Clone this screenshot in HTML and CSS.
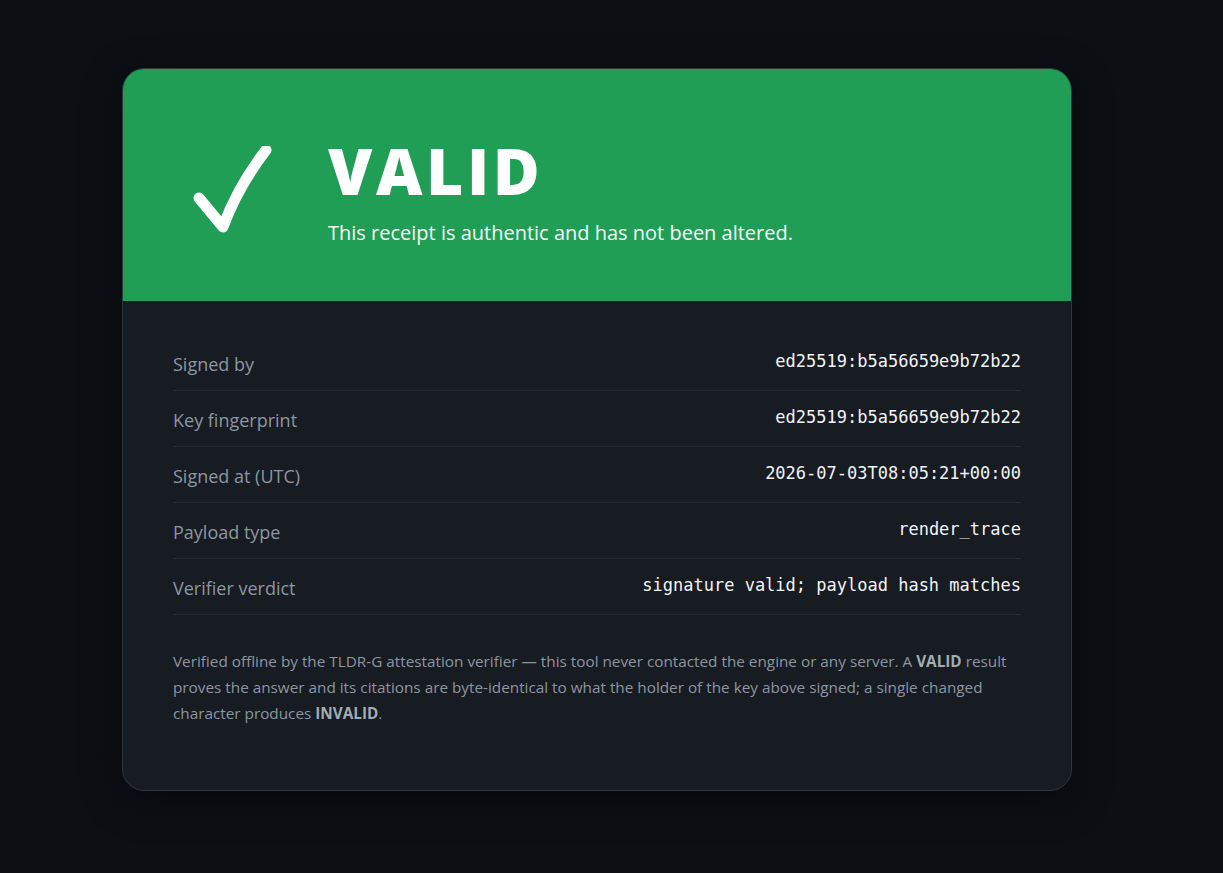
FILE: index.html
```html
<!DOCTYPE html>
<html lang="en">
<head>
<meta charset="utf-8">
<title>Receipt verification — VALID</title>
<link rel="stylesheet" href="styles.css">
</head>
<body>
<main class="page">
  <section class="card">
    <header class="banner">
      <svg class="check" viewBox="0 0 80 90" width="80" height="90" aria-hidden="true">
        <path d="M6 52 L30 81 Q44 42 73 4" fill="none" stroke="#ffffff" stroke-width="11" stroke-linecap="round" stroke-linejoin="round"/>
      </svg>
      <div class="banner-text">
        <h1 class="verdict">VALID</h1>
        <p class="summary">This receipt is authentic and has not been altered.</p>
      </div>
    </header>
    <div class="details">
      <dl class="rows">
        <div class="row"><dt>Signed by</dt><dd>ed25519:b5a56659e9b72b22</dd></div>
        <div class="row"><dt>Key fingerprint</dt><dd>ed25519:b5a56659e9b72b22</dd></div>
        <div class="row"><dt>Signed at (UTC)</dt><dd>2026-07-03T08:05:21+00:00</dd></div>
        <div class="row"><dt>Payload type</dt><dd>render_trace</dd></div>
        <div class="row"><dt>Verifier verdict</dt><dd>signature valid; payload hash matches</dd></div>
      </dl>
      <p class="note">Verified offline by the TLDR-G attestation verifier — this tool never contacted the engine or any server. A <strong>VALID</strong> result proves the answer and its citations are byte-identical to what the holder of the key above signed; a single changed character produces <strong>INVALID</strong>.</p>
    </div>
  </section>
</main>
</body>
</html>
```
FILE: styles.css
```css
* { box-sizing: border-box; }
html, body { margin: 0; padding: 0; }
body {
  background: #0c0f14;
  font-family: "Open Sans", "Noto Sans", sans-serif;
  color: #e6edf3;
  min-height: 873px;
}
.page {
  display: flex;
  padding: 68px 0 40px 122px;
}
.card {
  width: 950px;
  background: #171b22;
  border: 1px solid #30363d;
  border-radius: 22px;
  overflow: hidden;
  box-shadow: 0 10px 40px rgba(0, 0, 0, 0.45);
}
.banner {
  background: #209e55;
  display: flex;
  align-items: center;
  height: 232px;
  padding: 14px 0 0 70px;
  gap: 55px;
}
.check { display: block; flex: none; margin-top: -2px; }
.banner-text { display: flex; flex-direction: column; }
.verdict {
  margin: 0;
  font-size: 64px;
  line-height: 1;
  font-weight: 800;
  letter-spacing: 3.6px;
  color: #ffffff;
}
.summary {
  margin: 18px 0 0;
  font-size: 20px;
  line-height: 24px;
  color: #f1fbf4;
}
.details { padding: 34px 50px 64px; }
.rows { margin: 0; }
.row {
  display: flex;
  justify-content: space-between;
  align-items: center;
  height: 56px;
  border-bottom: 1px solid #262c35;
}
.row dt {
  font-size: 18px;
  color: #8d96a0;
  padding-top: 2px;
}
.row dd {
  margin: 0;
  font-family: "DejaVu Sans Mono", "Liberation Mono", monospace;
  font-size: 17px;
  color: #f0f3f6;
  padding-bottom: 4px;
}
.note {
  margin: 33px 0 0;
  font-size: 15.3px;
  line-height: 26px;
  color: #8d96a0;
}
.note strong { color: #a3abb5; font-weight: 700; }
```
